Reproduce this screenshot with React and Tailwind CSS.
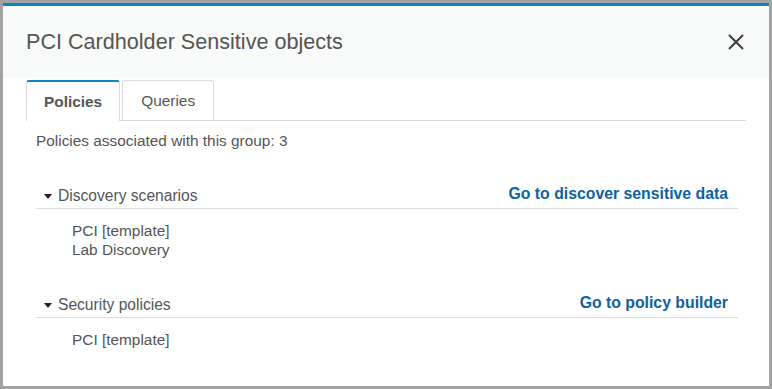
import React from "react";

function Caret() {
  return (
    <svg width="8" height="5" viewBox="0 0 8 5" className="shrink-0">
      <path d="M0 0 L8 0 L4 5 Z" fill="#222" />
    </svg>
  );
}

function Section({ title, link, items }) {
  return (
    <div className="mx-[10px] mr-[8px]">
      <div className="flex items-center justify-between border-b border-[#dcdcdc] pb-[2px] pl-[8px] pr-[10px]">
        <div className="flex items-center gap-[6px]">
          <Caret />
          <span className="text-[15.6px] leading-[20px] text-[#555]">{title}</span>
        </div>
        <span className="text-[15.8px] leading-[20px] font-bold text-[#0d62a0] -mt-[4px]">{link}</span>
      </div>
      <div className="mt-[12px] pl-[36px] text-[15.4px] leading-[19px] text-[#555]">
        {items.map((it) => (
          <div key={it}>{it}</div>
        ))}
      </div>
    </div>
  );
}

export default function App() {
  return (
    <div
      className="w-[772px] h-[389px] bg-[#a3a3a3] p-[3px] pb-[3px]"
      style={{ fontFamily: '"Liberation Sans", Arial, sans-serif' }}
    >
      <div className="h-full bg-white border-t-[3px] border-[#0a87c0] flex flex-col">
        <div className="h-[72px] bg-[#f9fafa] flex items-center justify-between pl-[23px] pr-[24px]">
          <div className="text-[21.6px] text-[#555] leading-[26px]">PCI Cardholder Sensitive objects</div>
          <svg width="18" height="18" viewBox="0 0 18 18">
            <path d="M2 2 L16 16 M16 2 L2 16" stroke="#444" strokeWidth="2.2" strokeLinecap="butt" />
          </svg>
        </div>
        <div className="px-[23px] mt-[2px]">
          <div className="flex gap-[2px] border-b border-[#d9d9d9] h-[41px]">
            <div className="h-[41px] -mb-px bg-white border-x border-[#dddddd] border-t-2 border-t-[#0a87c0] rounded-t-[3px] px-[17px] flex items-center text-[15.4px] font-bold text-[#555]">
              Policies
            </div>
            <div className="h-[40px] border border-b-0 border-[#dddddd] rounded-t-[3px] px-[18px] flex items-center text-[15.4px] text-[#555]">
              Queries
            </div>
          </div>
          <div className="pt-[10px] pl-[10px] text-[15.4px] leading-[20px] text-[#555]">
            Policies associated with this group: 3
          </div>
          <div className="mt-[35px]">
            <Section
              title="Discovery scenarios"
              link="Go to discover sensitive data"
              items={["PCI [template]", "Lab Discovery"]}
            />
          </div>
          <div className="mt-[36px]">
            <Section title="Security policies" link="Go to policy builder" items={["PCI [template]"]} />
          </div>
        </div>
      </div>
    </div>
  );
}
